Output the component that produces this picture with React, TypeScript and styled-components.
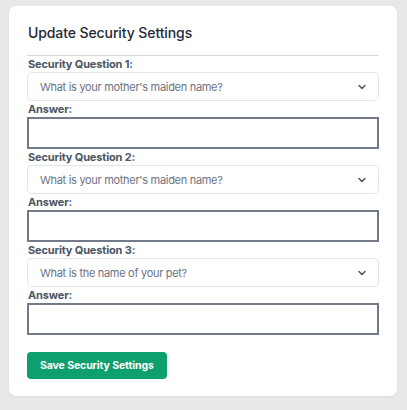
import React from "react";
import styled, { createGlobalStyle } from "styled-components";

const Global = createGlobalStyle`
  html, body { margin: 0; padding: 0; background: #e8e8e8; }
  body { font-family: Inter, "Noto Sans", sans-serif; }
  * { box-sizing: border-box; }
`;

const Page = styled.div`
  padding: 6px 10px 14px 9px;
`;

const Card = styled.form`
  background: #ffffff;
  border-radius: 7px;
  padding: 17px 18px 17px 18px;
  box-shadow: 0 1px 3px rgba(0, 0, 0, 0.05);
  display: flex;
  flex-direction: column;
`;

const Title = styled.h2`
  margin: 0 0 12px 1px;
  font-size: 14px;
  line-height: 20px;
  font-weight: 500;
  color: #1f2937;
  letter-spacing: -0.1px;
`;

const Divider = styled.hr`
  margin: 0;
  border: none;
  border-top: 1px solid #d4d7dc;
`;

const Label = styled.label`
  display: block;
  font-size: 11px;
  line-height: 16px;
  font-weight: 700;
  color: #4b5563;
  letter-spacing: -0.15px;
  padding-left: 1px;
`;

const SelectWrap = styled.div`
  position: relative;
  height: 29px;
`;

const Select = styled.select`
  appearance: none;
  width: 100%;
  height: 29px;
  border: 1px solid #e1e5ee;
  border-radius: 5px;
  background: #fff;
  padding: 0 30px 0 12px;
  font-family: inherit;
  font-size: 11px;
  color: #6b7280;
  letter-spacing: -0.3px;
  outline: none;
`;

const Chevron = styled.svg`
  position: absolute;
  right: 11px;
  top: 9px;
  pointer-events: none;
`;

const Input = styled.input`
  width: 100%;
  height: 32px;
  border: 2px solid #747b88;
  border-radius: 0;
  background: #fff;
  padding: 0 8px;
  font-family: inherit;
  font-size: 12px;
  outline: none;
`;

const Button = styled.button`
  align-self: flex-start;
  margin-top: 17px;
  height: 27px;
  padding: 0 13px;
  border: none;
  border-radius: 4px;
  background: #0e9f6e;
  color: #ffffff;
  font-family: inherit;
  font-size: 10.5px;
  font-weight: 700;
  letter-spacing: -0.1px;
  cursor: pointer;
`;

const questions = [
  "What is your mother's maiden name?",
  "What is your mother's maiden name?",
  "What is the name of your pet?",
];

export default function App() {
  return (
    <>
      <Global />
      <Page>
        <Card onSubmit={(e) => e.preventDefault()}>
          <Title>Update Security Settings</Title>
          <Divider />
          {questions.map((q, i) => (
            <React.Fragment key={i}>
              <Label>Security Question {i + 1}:</Label>
              <SelectWrap>
                <Select defaultValue={q}>
                  <option>What is your mother's maiden name?</option>
                  <option>What is the name of your pet?</option>
                </Select>
                <Chevron width="12" height="12" viewBox="0 0 24 24" fill="none" stroke="#4b5563" strokeWidth="3" strokeLinecap="round" strokeLinejoin="round">
                  <path d="m6 9 6 6 6-6" />
                </Chevron>
              </SelectWrap>
              <Label>Answer:</Label>
              <Input type="text" />
            </React.Fragment>
          ))}
          <Button type="submit">Save Security Settings</Button>
        </Card>
      </Page>
    </>
  );
}
